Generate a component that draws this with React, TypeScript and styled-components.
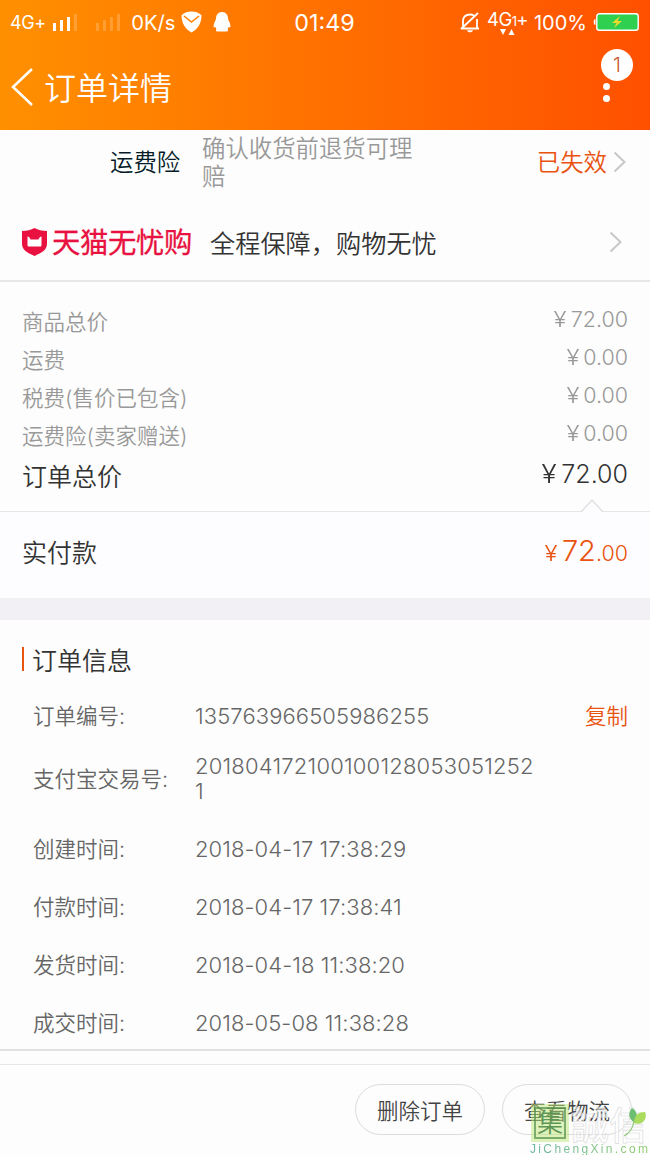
import React from "react";
import styled, { createGlobalStyle } from "styled-components";

const Global = createGlobalStyle`
  * { box-sizing: border-box; }
  body {
    margin: 0;
    background: #fdfdfd;
    font-family: Inter, "Noto Sans CJK SC", sans-serif;
    font-weight: 350;
    color: #333;
  }
`;

const Screen = styled.div`
  position: relative;
  width: 650px;
  height: 1155px;
  overflow: hidden;
  display: flex;
  flex-direction: column;
  background: #fdfdfd;
  white-space: nowrap;
`;

const Header = styled.header`
  height: 130px;
  flex: none;
  color: #fff;
  background: linear-gradient(90deg, #ff9000, #ff5000);
`;

const StatusBar = styled.div`
  height: 44px;
  display: grid;
  grid-template-columns: 1fr auto 1fr;
  align-items: center;
  padding: 0 11px 0 10px;
`;

const StatusGroup = styled.div<{ $end?: boolean }>`
  display: flex;
  align-items: center;
  justify-content: ${(p) => (p.$end ? "flex-end" : "flex-start")};
`;

const StatusText = styled.span<{ $size: number; $spacing?: number; $ml?: number }>`
  padding-top: 1px;
  font-size: ${(p) => p.$size}px;
  font-weight: 400;
  line-height: 24px;
  letter-spacing: ${(p) => p.$spacing ?? 0}px;
  margin-left: ${(p) => p.$ml ?? 0}px;
`;

const Icon = styled.svg<{ $ml?: number }>`
  display: block;
  flex: none;
  margin-left: ${(p) => p.$ml ?? 0}px;
`;

const Network = styled.span`
  display: flex;
  align-items: baseline;
  height: 26px;
  margin-left: 7px;
  font-size: 18.5px;
  font-weight: 400;
  line-height: 20px;
  letter-spacing: -0.6px;
  position: relative;
  small { font-size: 13px; }
  svg { position: absolute; left: 13px; bottom: 0; }
`;

const NavBar = styled.div`
  height: 86px;
  display: flex;
  align-items: center;
  padding: 0 17px 0 11px;
`;

const Title = styled.h1`
  flex: 1;
  margin: 3px 0 0 10px;
  font-size: 32px;
  font-weight: 350;
  line-height: 40px;
`;

const MoreButton = styled.div`
  position: relative;
  width: 33px;
  height: 86px;
`;

const Dots = styled.div`
  display: flex;
  flex-direction: column;
  gap: 5px;
  padding: 39px 0 0 3px;
  i { width: 7px; height: 7px; border-radius: 50%; background: #fff; }
`;

const Badge = styled.span`
  position: absolute;
  left: 1px;
  top: 5px;
  width: 32px;
  height: 32px;
  border-radius: 50%;
  background: #fff;
  color: #c8552a;
  font-size: 20px;
  line-height: 33px;
  text-align: center;
`;

const InsuranceRow = styled.section`
  height: 73px;
  flex: none;
  display: flex;
  align-items: flex-start;
  padding: 5px 24px 0 110px;
  line-height: 28px;
  font-size: 23.4px;
`;

const InsuranceName = styled.span`
  width: 92px;
  padding-top: 14px;
  color: #051b28;
`;

const InsuranceDesc = styled.span`
  width: 216px;
  white-space: normal;
  color: #999;
`;

const InsuranceState = styled.span`
  margin-left: auto;
  padding-top: 14px;
  display: flex;
  align-items: center;
  gap: 6px;
  color: #e9520f;
  svg { margin-top: -2px; }
`;

const PromiseRow = styled.section`
  height: 79px;
  flex: none;
  display: flex;
  align-items: center;
  padding: 0 28px 0 21px;
  border-bottom: 2px solid #e7e7e7;
`;

const Brand = styled.span`
  width: 158px;
  margin-left: 4px;
  padding-top: 2px;
  color: #e8113f;
  font-size: 28.4px;
  font-weight: 400;
  letter-spacing: -0.4px;
  line-height: 34px;
  -webkit-text-stroke: 0.3px #e8113f;
`;

const PromiseText = styled.span`
  flex: 1;
  padding-top: 4px;
  font-size: 25.2px;
  line-height: 36px;
`;

const PriceSection = styled.section`
  position: relative;
  height: 230px;
  flex: none;
  padding: 19px 22px 0;
  border-bottom: 1px solid #e6e5e8;
`;

const PriceRow = styled.div<{ $total?: boolean }>`
  display: flex;
  justify-content: space-between;
  align-items: center;
  height: ${(p) => (p.$total ? 43 : 38)}px;
  font-size: ${(p) => (p.$total ? 25 : 21.5)}px;
  color: ${(p) => (p.$total ? "#333" : "#999")};
`;

const Amount = styled.span<{ $size: number }>`
  display: flex;
  align-items: baseline;
  font-size: ${(p) => p.$size}px;
  margin-top: -2px;
`;

const Yen = styled.span<{ $gap: number }>`
  margin-right: ${(p) => p.$gap}px;
  transform: scaleX(1.12);
  transform-origin: right;
`;

const Notch = styled.svg`
  position: absolute;
  right: 46px;
  bottom: -1px;
`;

const PaidRow = styled.section`
  height: 86px;
  flex: none;
  display: flex;
  justify-content: space-between;
  align-items: center;
  padding: 0 22px 8px;
  background: #fdfcfe;
  font-size: 25px;
`;

const PaidAmount = styled.span`
  display: flex;
  align-items: baseline;
  padding-top: 2px;
  color: #e9520f;
  font-size: 21.5px;
  line-height: 34px;
  b { font-weight: 350; font-size: 29px; }
`;

const Divider = styled.div`
  height: 22px;
  flex: none;
  background: #f2f0f4;
`;

const InfoSection = styled.section`
  height: 431px;
  flex: none;
  padding: 19px 22px 0;
  border-bottom: 2px solid #e2e2e2;
`;

const InfoTitle = styled.h2`
  display: flex;
  align-items: center;
  gap: 8px;
  height: 40px;
  margin: 0;
  font-size: 25px;
  font-weight: 350;
  &::before {
    content: "";
    width: 2px;
    height: 24px;
    background: #e9520f;
  }
`;

const InfoRow = styled.div<{ $height: number; $gap?: number }>`
  display: flex;
  align-items: center;
  height: ${(p) => p.$height}px;
  margin-bottom: ${(p) => p.$gap ?? 0}px;
  padding-left: 11px;
  font-size: 21.5px;
  color: #666;
`;

const InfoLabel = styled.span`
  width: 162px;
  margin-top: -1px;
`;

const InfoValue = styled.span<{ $spacing?: number }>`
  width: 343px;
  padding-top: 2px;
  font-size: 22px;
  line-height: 25px;
  letter-spacing: ${(p) => p.$spacing ?? 0}px;
  overflow-wrap: anywhere;
  white-space: normal;
`;

const CopyLink = styled.a`
  margin: -1px 0 0 auto;
  color: #e9520f;
`;

const Footer = styled.footer`
  flex: 1;
  margin-top: 13px;
  border-top: 1px solid #e6e6e6;
  display: flex;
  justify-content: flex-end;
  gap: 17px;
  padding: 19px 18px 0;
`;

const PillButton = styled.button`
  width: 130px;
  height: 51px;
  padding: 0;
  border: 1px solid #dcdcdc;
  border-radius: 26px;
  background: #fdfdfd;
  color: #444;
  font: inherit;
  font-size: 21.5px;
`;

const Watermark = styled.div`
  position: absolute;
  left: 530px;
  top: 1105px;
  width: 120px;
  height: 50px;
`;

const WatermarkMark = styled.div`
  display: flex;
  align-items: center;
  height: 35px;
  padding-left: 4px;
`;

const Seal = styled.span`
  width: 32px;
  height: 32px;
  border: 2px solid rgba(74, 135, 68, 0.65);
  outline: 3px solid rgba(190, 232, 120, 0.5);
  background: rgba(190, 232, 120, 0.5);
  color: #5d9655;
  font-size: 26px;
  line-height: 28px;
  text-align: center;
`;

const Hollow = styled.span`
  margin-left: 5px;
  font-family: "Noto Sans CJK TC", sans-serif;
  font-size: 38px;
  line-height: 35px;
  font-weight: 500;
  color: rgba(255, 255, 255, 0.5);
  -webkit-text-stroke: 0.6px #dadada;
`;

const Leaf = styled.svg`
  position: absolute;
  left: 94px;
  top: 2px;
`;

const Domain = styled.div`
  font-family: "Liberation Sans", sans-serif;
  font-size: 12px;
  font-weight: 400;
  line-height: 19px;
  letter-spacing: 2.35px;
  color: transparent;
  background: linear-gradient(90deg, #6cb3a4, #8fcb6c);
  background-clip: text;
`;

const Chevron = () => (
  <Icon width="13" height="22" viewBox="0 0 13 22" fill="none" stroke="#c8c8c8" strokeWidth="2">
    <path d="M1.5 1.5 11.5 11 1.5 20.5" />
  </Icon>
);

const prices = [
  ["商品总价", "72.00"],
  ["运费", "0.00"],
  ["税费(售价已包含)", "0.00"],
  ["运费险(卖家赠送)", "0.00"],
];

const times = [
  ["创建时间:", "2018-04-17 17:38:29"],
  ["付款时间:", "2018-04-17 17:38:41"],
  ["发货时间:", "2018-04-18 11:38:20"],
  ["成交时间:", "2018-05-08 11:38:28"],
];

export default function App() {
  return (
    <Screen>
      <Global />
      <Header>
        <StatusBar>
          <StatusGroup>
            <StatusText $size={18} $spacing={-0.4}>4G+</StatusText>
            <Icon $ml={7} width="68" height="20" viewBox="0 0 68 20" fill="#fff">
              <path d="M0 11h3v8H0zM7 8h3v11H7zM14 5h3v14h-3z" />
              <path opacity=".2" d="M21 2h3v17h-3z" />
              <path opacity=".2" d="M43 11h3v8h-3zM50 8h3v11h-3zM57 5h3v14h-3zM64 2h3v17h-3z" />
            </Icon>
            <StatusText $size={20.2} $ml={10.5}>0K/s</StatusText>
            <Icon $ml={5} width="21" height="22" viewBox="0 0 21 22">
              <path d="M10.500.5C14 .5 17.500 1.500 20.500 4.200 20.500 12 17 18 10.500 21.500 4 18 .5 12 .5 4.200 3.500 1.500 7 .5 10.500.5Z" fill="#fff" />
              <path d="M3 5 10.500 11 18 5" fill="none" stroke="#ff8300" strokeWidth="1.600" />
            </Icon>
            <Icon $ml={11} width="18" height="20" viewBox="0 0 18 20" fill="#fff">
              <path d="M9 0c4 0 6 3 6 6.500 0 2 2.500 4.300 2.500 8 0 1-.8 1.200-1.700.3-.3.900-.7 1.600-1.300 2.200 1 .6.8 2.500-1 2.500H4.500c-1.800 0-2-1.900-1-2.500-.6-.6-1-1.300-1.300-2.200-.9.900-1.700.7-1.700-.3 0-3.700 2.500-6 2.500-8C3 3 5 0 9 0Z" />
            </Icon>
          </StatusGroup>
          <StatusText $size={23.3}>01:49</StatusText>
          <StatusGroup $end>
            <Icon width="20" height="21" viewBox="0 0 20 21" fill="none" stroke="#fff" strokeWidth="1.800">
              <path d="M3 16V9c0-4 2.500-6.500 7-6.500 1.500 0 3 .5 4 1M17 7v9M1 16.500h18M1 17 18 1" />
              <path d="M7 18.300h6c-.5 1.500-1.500 2-3 2s-2.500-.5-3-2Z" fill="#fff" stroke="none" />
            </Icon>
            <Network>
              4G<small>1</small>+
              <svg width="15" height="6" viewBox="0 0 15 6" fill="#fff">
                <path d="M0 0h6L3 6zM8.500 6h6l-3-6z" />
              </svg>
            </Network>
            <StatusText $size={20} $ml={6}>100%</StatusText>
            <Icon $ml={6} width="46" height="18" viewBox="0 0 46 18">
              <path d="M2.500 6C0 6 0 12 2.500 12Z" fill="#fff" />
              <rect x="3.800" y=".8" width="41.400" height="16.400" rx="2.500" fill="#2fd04f" stroke="#fff" strokeWidth="1.400" />
              <path d="m27 3-8 7h4.500L21 15l8-7h-4.500Z" fill="#ecd92e" />
            </Icon>
          </StatusGroup>
        </StatusBar>
        <NavBar>
          <Icon width="23" height="38" viewBox="0 0 23 38" fill="none" stroke="#fff" strokeWidth="2.500">
            <path d="M21 1 2 19 21 37" />
          </Icon>
          <Title>订单详情</Title>
          <MoreButton>
            <Dots><i /><i /></Dots>
            <Badge>1</Badge>
          </MoreButton>
        </NavBar>
      </Header>

      <InsuranceRow>
        <InsuranceName>运费险</InsuranceName>
        <InsuranceDesc>确认收货前退货可理赔</InsuranceDesc>
        <InsuranceState>已失效<Chevron /></InsuranceState>
      </InsuranceRow>

      <PromiseRow>
        <Icon width="27" height="28" viewBox="0 0 27 28">
          <path d="M13.500 0C17 2 21 3 26 3v13c0 6-6 9-12.500 12C7 25 1 22 1 16V3c5 0 9-1 12.500-3Z" fill="#e8113f" />
          <path d="M6.500 8.500c1.500.3 2.500 1.200 3 3h8c.5-1.800 1.500-2.700 3-3V17c0 1-.5 1.500-1.500 1.500H8c-1 0-1.500-.5-1.500-1.500Z" fill="#fff" />
        </Icon>
        <Brand>天猫无忧购</Brand>
        <PromiseText>全程保障，购物无忧</PromiseText>
        <Chevron />
      </PromiseRow>

      <PriceSection>
        {prices.map(([label, value]) => (
          <PriceRow key={label}>
            <span>{label}</span>
            <Amount $size={21.5}><Yen $gap={4}>¥</Yen>{value}</Amount>
          </PriceRow>
        ))}
        <PriceRow $total>
          <span>订单总价</span>
          <Amount $size={25}><Yen $gap={5}>¥</Yen>72.00</Amount>
        </PriceRow>
        <Notch width="24" height="13" viewBox="0 0 24 13">
          <path d="M1 13 12 1 23 13" fill="#fdfcfe" stroke="#e0e0e2" strokeWidth="1.400" />
        </Notch>
      </PriceSection>

      <PaidRow>
        <span>实付款</span>
        <PaidAmount><Yen $gap={4}>¥</Yen><b>72</b>.00</PaidAmount>
      </PaidRow>
      <Divider />

      <InfoSection>
        <InfoTitle>订单信息</InfoTitle>
        <InfoRow $height={72}>
          <InfoLabel>订单编号:</InfoLabel>
          <InfoValue $spacing={0.1}>135763966505986255</InfoValue>
          <CopyLink>复制</CopyLink>
        </InfoRow>
        <InfoRow $height={53} $gap={15}>
          <InfoLabel>支付宝交易号:</InfoLabel>
          <InfoValue $spacing={0.2}>2018041721001001280530512521</InfoValue>
        </InfoRow>
        {times.map(([label, value]) => (
          <InfoRow key={label} $height={58}>
            <InfoLabel>{label}</InfoLabel>
            <InfoValue $spacing={0.08}>{value}</InfoValue>
          </InfoRow>
        ))}
      </InfoSection>

      <Footer>
        <PillButton>删除订单</PillButton>
        <PillButton>查看物流</PillButton>
      </Footer>

      <Watermark>
        <WatermarkMark>
          <Seal>集</Seal>
          <Hollow>誠信</Hollow>
        </WatermarkMark>
        <Leaf width="24" height="32" viewBox="0 0 24 32">
          <path d="M10 15C4 12 4 5 8 1c5 3 7 9 2 14Z" fill="#6dbd73" />
          <path d="M10 16c0-8 5-11 11-11 3 7-3 14-11 11Z" fill="#a9dc5c" />
          <path d="M10 14c-1 7-4 12-10 15" fill="none" stroke="#8cc873" strokeWidth="1.200" />
        </Leaf>
        <Domain>JiChengXin.com</Domain>
      </Watermark>
    </Screen>
  );
}
